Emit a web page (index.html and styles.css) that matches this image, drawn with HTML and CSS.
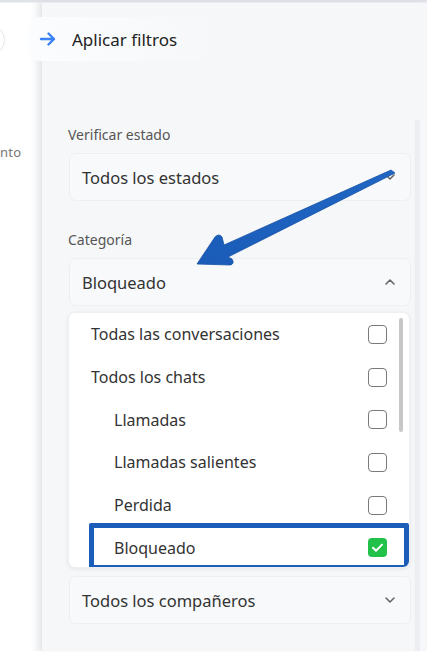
FILE: index.html
```html
<!DOCTYPE html>
<html lang="es">
<head>
<meta charset="utf-8">
<link rel="stylesheet" href="styles.css">
</head>
<body>
<div class="topline"></div>
<div class="page">
  <aside class="side">
    <div class="circle"></div>
    <div class="side-text">nto</div>
  </aside>
  <main class="panel">
    <header class="tab">
      <svg class="tab-arrow" width="18" height="16" viewBox="0 0 18 16"><path d="M2 8h13M9.5 2.5l5.5 5.5-5.5 5.5" fill="none" stroke="#3b82f6" stroke-width="2.4" stroke-linecap="round" stroke-linejoin="round"/></svg>
      <span class="tab-title">Aplicar filtros</span>
    </header>
    <div class="body">
      <div class="content">
        <div class="label first">Verificar estado</div>
        <div class="select">
          <span>Todos los estados</span>
          <svg class="chev" width="12" height="8" viewBox="0 0 12 8"><path d="M2 2l4 4 4-4" fill="none" stroke="#666" stroke-width="1.6" stroke-linecap="round" stroke-linejoin="round"/></svg>
        </div>
        <div class="label">Categoría</div>
        <div class="select">
          <span>Bloqueado</span>
          <svg class="chev" width="12" height="8" viewBox="0 0 12 8"><path d="M2 6l4-4 4 4" fill="none" stroke="#666" stroke-width="1.6" stroke-linecap="round" stroke-linejoin="round"/></svg>
        </div>
        <div class="dropdown">
          <div class="row"><span>Todas las conversaciones</span><span class="box"></span></div>
          <div class="row"><span>Todos los chats</span><span class="box"></span></div>
          <div class="row sub"><span>Llamadas</span><span class="box"></span></div>
          <div class="row sub"><span>Llamadas salientes</span><span class="box"></span></div>
          <div class="row sub"><span>Perdida</span><span class="box"></span></div>
          <div class="row sub"><span>Bloqueado</span><span class="box checked"><svg width="19" height="19" viewBox="0 0 19 19"><path d="M5 9.8l3 3 6-6.2" fill="none" stroke="#fff" stroke-width="2" stroke-linecap="round" stroke-linejoin="round"/></svg></span></div>
          <div class="scrollthumb"></div>
          <div class="highlight"></div>
        </div>
        <div class="select after">
          <span>Todos los compañeros</span>
          <svg class="chev" width="12" height="8" viewBox="0 0 12 8"><path d="M2 2l4 4 4-4" fill="none" stroke="#666" stroke-width="1.6" stroke-linecap="round" stroke-linejoin="round"/></svg>
        </div>
      </div>
      <div class="track"></div>
    </div>
  </main>
</div>
<svg class="annot" width="427" height="652" viewBox="0 0 427 652">
  <defs>
    <linearGradient id="ag" x1="0" y1="1" x2="1" y2="0">
      <stop offset="0" stop-color="#1a5cb8"/>
      <stop offset="1" stop-color="#2166c4"/>
    </linearGradient>
  </defs>
  <path d="M197 264 L215 237 Q219 233 222 237 L224 245 L391 170 L395 173 L228 257 L232 259 Q235 264 230 265 Z" fill="url(#ag)" stroke="#1752a6" stroke-width="0.8" stroke-linejoin="round"/>
</svg>
</body>
</html>
```
FILE: styles.css
```css
* { box-sizing: border-box; }
html, body { margin: 0; padding: 0; }
body {
  width: 427px;
  height: 652px;
  overflow: hidden;
  background: #ffffff;
  font-family: "Noto Sans", "Open Sans", sans-serif;
  color: #2b2b2b;
  position: relative;
}
.topline {
  height: 3px;
  background: #dfe2e6;
  border-bottom: 1px solid #eef0f2;
}
.page {
  display: flex;
  height: 648px;
}
.side {
  width: 42px;
  flex: none;
  padding-top: 22px;
  background: linear-gradient(to right, #ffffff 0, #ffffff 30px, #f0f1f3 42px);
}
.circle {
  width: 30px;
  height: 30px;
  margin-left: -25px;
  border: 1px solid #e3e5e8;
  border-radius: 50%;
  background: #fff;
}
.side-text {
  margin-top: 88px;
  font-size: 13px;
  color: #777;
  letter-spacing: 0.2px;
}
.panel {
  flex: 1;
  background: #f6f7f9;
  display: flex;
  flex-direction: column;
  box-shadow: -3px 0 6px rgba(0, 0, 0, 0.05);
}
.tab {
  margin-top: 14px;
  margin-left: -14px;
  height: 44px;
  border-radius: 12px 0 0 12px;
  background: linear-gradient(to right, #fbfcfd 0, #fafbfc 60px, #f6f7f9 200px);
  display: flex;
  align-items: center;
  padding-left: 11px;
  gap: 15px;
}
.tab-title {
  font-size: 17px;
  color: #222;
}
.body {
  flex: 1;
  display: flex;
  padding-top: 59px;
}
.content {
  width: 369px;
  padding-left: 26px;
  margin-top: 5px;
}
.track {
  width: 6px;
  margin-left: 3px;
  background: #eceef1;
  border-left: 1px solid #f3f4f6;
}
.label {
  font-size: 14px;
  color: #555;
  height: 20px;
  line-height: 20px;
  margin: 29px 0 8px;
}
.label.first { margin-top: 0; }
.select {
  height: 48px;
  margin-left: 1px;
  width: 342px;
  border: 1px solid #edeff2;
  border-radius: 7px;
  background: #f8f9fa;
  display: flex;
  align-items: center;
  justify-content: space-between;
  padding: 0 14px 0 12px;
  font-size: 16.5px;
  color: #333;
}
.chev { flex: none; }
.dropdown {
  position: relative;
  margin-top: 6px;
  width: 342px;
  height: 256px;
  background: #fff;
  border-radius: 7px;
  box-shadow: 0 1px 4px rgba(0, 0, 0, 0.08);
  border: 1px solid #eef0f2;
  overflow: hidden;
}
.row {
  height: 42.7px;
  display: flex;
  align-items: center;
  justify-content: space-between;
  padding: 0 22px 0 22px;
  font-size: 16px;
  color: #333;
}
.row.sub { padding-left: 45px; }
.box {
  width: 19px;
  height: 19px;
  border: 1px solid #7a7a7a;
  border-radius: 4px;
  background: #fff;
  flex: none;
}
.box.checked {
  border: none;
  background: #21c14a;
}
.box.checked svg { display: block; }
.scrollthumb {
  position: absolute;
  right: 6px;
  top: 5px;
  width: 4px;
  height: 114px;
  border-radius: 2px;
  background: #c7c7c7;
}
.highlight {
  position: absolute;
  left: 20px;
  top: 210px;
  width: 320px;
  height: 47px;
  border: 5px solid #1c5db9;
  border-radius: 2px;
}
.select.after { margin-top: 8px; }
.annot {
  position: absolute;
  left: 0;
  top: 0;
  pointer-events: none;
}
```
